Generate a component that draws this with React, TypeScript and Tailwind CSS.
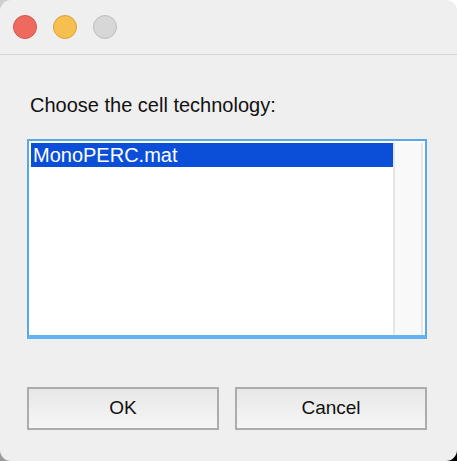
import React from "react";

export default function App() {
  return (
    <div className="w-[457px] h-[461px] bg-[conic-gradient(#ffffff_0deg_90deg,#000000_90deg_180deg,#9a9a9a_180deg_270deg,#cfcfcf_270deg_360deg)]" style={{ fontFamily: '"Liberation Sans", Arial, sans-serif' }}>
      <div className="w-[457px] h-[461px] rounded-[11px] bg-[#efefef] overflow-hidden flex flex-col">
        <div className="h-[55px] border-b border-[#d3d3d3] flex items-start pt-[15px] pl-[13px] gap-[16px]">
          <div className="w-[24px] h-[24px] rounded-full bg-[#ee6a5f] border border-[#d4574b]" />
          <div className="w-[24px] h-[24px] rounded-full bg-[#f6bf50] border border-[#d9a23c]" />
          <div className="w-[24px] h-[24px] rounded-full bg-[#d7d7d7] border border-[#bdbdbd]" />
        </div>
        <div className="px-[27px] flex flex-col">
          <div className="mt-[40px] pl-[3px] text-[20px] leading-[20px] text-[#111]">Choose the cell technology:</div>
          <div className="mt-[24px] w-[400px] h-[200px] border-2 border-[#5aa9e6] border-b-4 border-b-[#63b3f2] bg-white pt-[2px] px-[2px] flex">
            <div className="w-[362px] h-[192px]">
              <div className="h-[24px] bg-[#0b4fd9] text-white text-[20px] leading-[24px] pl-[2px]">MonoPERC.mat</div>
            </div>
            <div className="w-[30px] h-[192px] bg-[#f9f9f9] border-l-2 border-r-2 border-[#e6e6e6]" />
          </div>
          <div className="mt-[48px] flex gap-[16px]">
            <button className="w-[192px] h-[43px] border-2 border-[#acacac] bg-[linear-gradient(#e7e7e7,#f6f6f6)] text-[19px] text-[#111]">OK</button>
            <button className="w-[192px] h-[43px] border-2 border-[#acacac] bg-[linear-gradient(#e7e7e7,#f6f6f6)] text-[19px] text-[#111]">Cancel</button>
          </div>
        </div>
      </div>
    </div>
  );
}
